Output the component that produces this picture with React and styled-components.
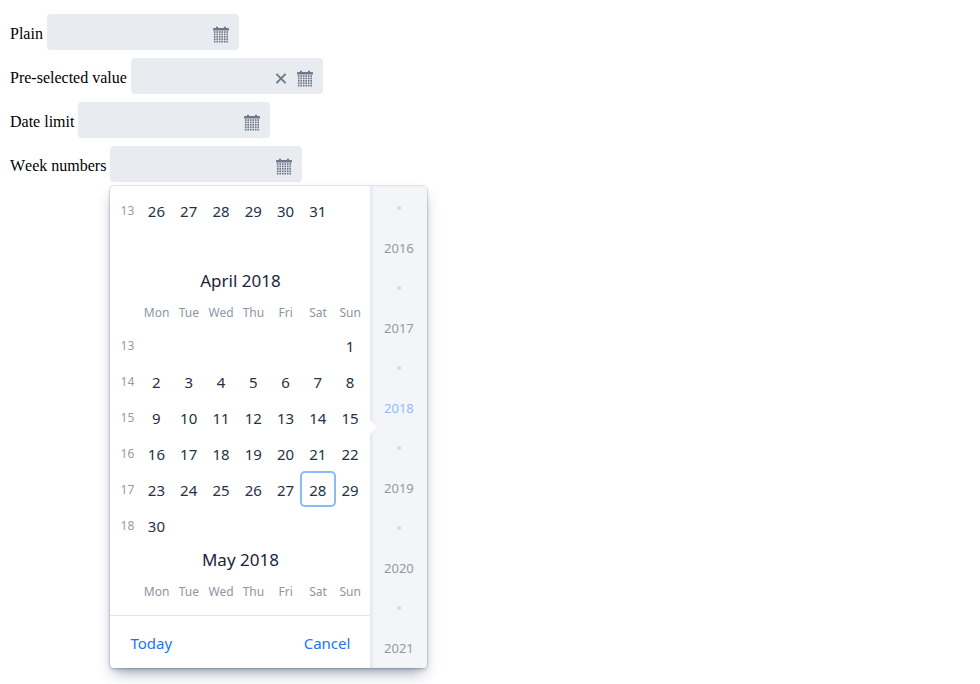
import React from "react";
import styled, { createGlobalStyle } from "styled-components";

const GlobalStyle = createGlobalStyle`
  body {
    margin: 0;
    background: #fff;
    color: #000;
    font-family: "Liberation Serif", "Times New Roman", serif;
    font-size: 16px;
  }
  *, *::before, *::after { box-sizing: border-box; }
`;

const sans = `"Noto Sans", "Open Sans", sans-serif`;

const Page = styled.main`
  display: flex;
  flex-direction: column;
  gap: 8px;
  min-height: 100vh;
  padding: 14px 10px;
`;

const Row = styled.div`
  display: flex;
  align-items: center;
  gap: 4px;
`;

const Label = styled.label`
  padding-top: 4px;
  font-kerning: none;
  line-height: 20px;
`;

const Picker = styled.div`
  position: relative;
`;

const Field = styled.div`
  display: flex;
  align-items: center;
  width: 192px;
  height: 36px;
  padding: 0 6px 0 8px;
  border-radius: 4px;
  background: #e8ebef;
`;

const TextInput = styled.input`
  flex: 1;
  min-width: 0;
  height: 32px;
  padding: 0;
  border: 0;
  outline: 0;
  background: transparent;
  color: #243044;
  font: 16px ${sans};
`;

const IconButton = styled.button`
  display: grid;
  place-items: center;
  width: 24px;
  height: 24px;
  margin-top: 4px;
  padding: 0;
  border: 0;
  background: transparent;
  color: #6e7889;
`;

const Popup = styled.section`
  position: absolute;
  z-index: 1;
  top: calc(100% + 4px);
  left: 0;
  display: flex;
  width: 317px;
  height: 482px;
  border-radius: 4px;
  background: #fff;
  font-family: ${sans};
  box-shadow: 0 0 0 1px rgba(25, 52, 88, 0.1), 0 2px 4px -1px rgba(25, 52, 88, 0.3),
    0 8px 14px -4px rgba(25, 52, 88, 0.45);
`;

const Main = styled.div`
  display: flex;
  flex: 1;
  flex-direction: column;
  min-width: 0;
`;

const Months = styled.div`
  flex: 1;
  min-height: 0;
  overflow: hidden;
  padding: 6px 4px 0;
`;

const MonthTable = styled.table`
  width: 100%;
  table-layout: fixed;
  border-collapse: collapse;
  border-spacing: 0;
`;

const MonthTitle = styled.caption`
  height: 34px;
  padding: 0;
  color: #19253a;
  font-size: 17px;
  line-height: 34px;
`;

const WeekHead = styled.td`
  width: 26px;
  padding: 0;
`;

const DayHead = styled.th`
  height: 29px;
  padding: 1px 0 0;
  color: #8d96a3;
  font-size: 12px;
  font-weight: 400;
  line-height: 28px;
`;

const WeekNumber = styled.th`
  width: 26px;
  height: 36px;
  padding: 0;
  color: #949ca9;
  font-size: 12px;
  font-weight: 400;
`;

const DayCell = styled.td`
  height: 36px;
  padding: 0;
`;

const Day = styled.button`
  display: block;
  width: 36px;
  height: 36px;
  margin: 0 -2px;
  padding: 2px 0 0;
  border: 0;
  border-radius: 5px;
  background: transparent;
  box-shadow: ${(p) => (p.$current ? "inset 0 0 0 2px #8abaf9" : "none")};
  color: #253247;
  font: 15px ${sans};
`;

const Footer = styled.footer`
  display: flex;
  align-items: center;
  justify-content: space-between;
  height: 53px;
  padding: 2px 20px 0;
  border-top: 1px solid #e3e7ec;
`;

const TextButton = styled.button`
  padding: 0;
  border: 0;
  background: transparent;
  color: #1676f3;
  font: 15px ${sans};
`;

const YearColumn = styled.div`
  position: relative;
  display: flex;
  flex-direction: column;
  width: 57px;
  padding-top: 2px;
  border-radius: 0 4px 4px 0;
  background: #f3f5f7;
  box-shadow: inset 3px 0 3px -1px #e3e7ec;

  &::before {
    content: "";
    position: absolute;
    top: 236px;
    left: -5px;
    width: 10px;
    height: 10px;
    background: #fff;
    transform: rotate(45deg);
  }
`;

const Year = styled.button`
  height: 40px;
  padding: 0;
  border: 0;
  background: transparent;
  color: ${(p) => (p.$current ? "#8fbbf7" : "#929aa6")};
  font: 13px ${sans};
`;

const Dot = styled.span`
  display: grid;
  place-items: center;
  height: 40px;

  &::before {
    content: "";
    width: 4px;
    height: 4px;
    border-radius: 50%;
    background: #d5dbe2;
  }
`;

const CalendarIcon = () => (
  <svg width="16" height="18" viewBox="0 0 16 18" fill="currentColor" aria-hidden="true">
    <path d="M0 4Q0 3 1 3H3V1.8H5V3H11V1.8H13V3H15Q16 3 16 4V5.6H0Z" />
    {[0, 1, 2, 3, 4].map((r) =>
      [0, 1, 2, 3, 4, 5].map((c) => (
        <rect key={`${r}-${c}`} x={0.9 + c * 2.5} y={6.2 + r * 2.4} width="1.6" height="1.7" />
      ))
    )}
  </svg>
);

const ClearIcon = () => (
  <svg width="12" height="12" viewBox="0 0 12 12" fill="none" stroke="currentColor" strokeWidth="2" aria-hidden="true">
    <path d="M1.4 1.9L10.6 11.1M10.6 1.9L1.4 11.1" />
  </svg>
);

const dayNames = ["Mon", "Tue", "Wed", "Thu", "Fri", "Sat", "Sun"];

const march = [
  { week: 13, days: [26, 27, 28, 29, 30, 31, null] },
  { week: null, days: [null, null, null, null, null, null, null] },
];

const april = [
  { week: 13, days: [null, null, null, null, null, null, 1] },
  { week: 14, days: [2, 3, 4, 5, 6, 7, 8] },
  { week: 15, days: [9, 10, 11, 12, 13, 14, 15] },
  { week: 16, days: [16, 17, 18, 19, 20, 21, 22] },
  { week: 17, days: [23, 24, 25, 26, 27, 28, 29] },
  { week: 18, days: [30, null, null, null, null, null, null] },
];

const years = [2016, 2017, 2018, 2019, 2020, 2021];

function Month({ title, weeks, today }) {
  return (
    <MonthTable>
      {title && <MonthTitle>{title}</MonthTitle>}
      {title && (
        <thead>
          <tr>
            <WeekHead />
            {dayNames.map((name) => (
              <DayHead key={name} scope="col">{name}</DayHead>
            ))}
          </tr>
        </thead>
      )}
      <tbody>
        {weeks.map(({ week, days }, i) => (
          <tr key={i}>
            <WeekNumber scope="row">{week}</WeekNumber>
            {days.map((day, j) => (
              <DayCell key={j}>
                {day && <Day type="button" $current={day === today}>{day}</Day>}
              </DayCell>
            ))}
          </tr>
        ))}
      </tbody>
    </MonthTable>
  );
}

function CalendarPopup() {
  return (
    <Popup role="dialog" aria-label="Calendar">
      <Main>
        <Months>
          <Month weeks={march} />
          <Month title="April 2018" weeks={april} today={28} />
          <Month title="May 2018" weeks={[]} />
        </Months>
        <Footer>
          <TextButton type="button">Today</TextButton>
          <TextButton type="button">Cancel</TextButton>
        </Footer>
      </Main>
      <YearColumn>
        {years.map((year) => (
          <React.Fragment key={year}>
            <Dot />
            <Year type="button" $current={year === 2018}>{year}</Year>
          </React.Fragment>
        ))}
      </YearColumn>
    </Popup>
  );
}

function DatePicker({ id, label, clearable, open }) {
  return (
    <Row>
      <Label htmlFor={id}>{label}</Label>
      <Picker>
        <Field>
          <TextInput id={id} type="text" />
          {clearable && (
            <IconButton type="button" aria-label="Clear">
              <ClearIcon />
            </IconButton>
          )}
          <IconButton type="button" aria-label="Open calendar">
            <CalendarIcon />
          </IconButton>
        </Field>
        {open && <CalendarPopup />}
      </Picker>
    </Row>
  );
}

export default function App() {
  return (
    <>
      <GlobalStyle />
      <Page>
        <DatePicker id="plain" label="Plain" />
        <DatePicker id="preselected" label="Pre-selected value" clearable />
        <DatePicker id="limit" label="Date limit" />
        <DatePicker id="weeks" label="Week numbers" open />
      </Page>
    </>
  );
}
